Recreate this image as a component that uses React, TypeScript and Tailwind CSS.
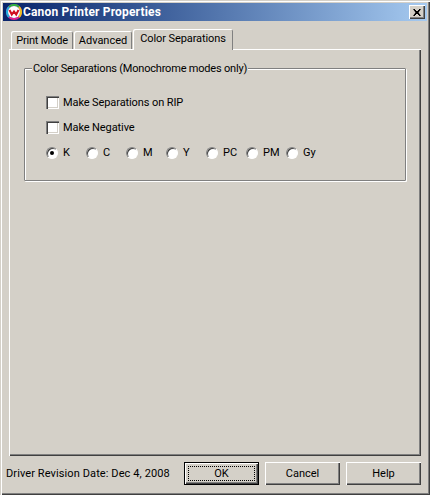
import type { ReactNode } from 'react'

const FONT = "font-['Roboto','Liberation_Sans',sans-serif]"
const RAISED =
  'shadow-[inset_1px_1px_0_#ffffff,inset_-1px_-1px_0_#404040,inset_-2px_-2px_0_#808080]'
const SUNKEN =
  'shadow-[inset_1px_1px_0_#808080,inset_2px_2px_0_#404040,inset_-1px_-1px_0_#ffffff,inset_-2px_-2px_0_#d4d0c8]'

const CHANNELS = [
  { label: 'K', checked: true },
  { label: 'C' },
  { label: 'M' },
  { label: 'Y' },
  { label: 'PC' },
  { label: 'PM' },
  { label: 'Gy' },
]

function AppLogo() {
  return (
    <svg width="16" height="16" viewBox="0 0 16 16" className="shrink-0">
      <circle cx="8" cy="8" r="7" fill="none" stroke="#e02090" strokeWidth="2" />
      <path d="M3 3 A7 7 0 0 1 13 3" fill="none" stroke="#30b040" strokeWidth="2" />
      <path d="M13 3 A7 7 0 0 1 13 13" fill="none" stroke="#f0c020" strokeWidth="2" />
      <path d="M3 13 A7 7 0 0 1 3 3" fill="none" stroke="#20b0e0" strokeWidth="2" />
      <circle cx="8" cy="8" r="6" fill="#ffffff" />
      <path d="M3.5 6 L5.8 10.5 L8 7.5 L10.2 10.5 L12.5 6" fill="none" stroke="#d01020" strokeWidth="2" />
    </svg>
  )
}

function Tab({ children, active, className }: { children: ReactNode; active?: boolean; className: string }) {
  return (
    <div
      className={`flex items-center justify-center rounded-t-[2px] bg-[#d4d0c8] shadow-[inset_1px_1px_0_#ffffff,inset_-1px_0_0_#808080] ${
        active ? 'relative z-10 -mx-px -mb-px h-[21px] pb-[2px]' : 'h-[18px] pt-[1px]'
      } ${className}`}
    >
      {children}
    </div>
  )
}

function Checkbox({ label }: { label: string }) {
  return (
    <div className="flex h-[13px] items-center gap-[4px]">
      <span className={`size-[13px] bg-white ${SUNKEN}`} />
      <span className="tracking-[-0.1px]">{label}</span>
    </div>
  )
}

function Radio({ label, checked }: { label: string; checked?: boolean }) {
  return (
    <div className="flex h-[13px] w-[40px] items-center gap-[5px]">
      <span className="flex size-[12px] items-center justify-center rounded-full border border-t-[#808080] border-r-white border-b-white border-l-[#808080] bg-white shadow-[inset_1px_1px_0_#404040]">
        {checked && <span className="size-[4px] rounded-full bg-black" />}
      </span>
      <span>{label}</span>
    </div>
  )
}

function DialogButton({ children, isDefault, className }: { children: ReactNode; isDefault?: boolean; className: string }) {
  if (isDefault) {
    return (
      <div className={`h-[23px] border border-black ${className}`}>
        <div className={`flex h-full items-center justify-center p-[3px] ${RAISED}`}>
          <div className="flex size-full items-center justify-center border border-dotted border-black">{children}</div>
        </div>
      </div>
    )
  }
  return <div className={`flex h-[23px] items-center justify-center ${RAISED} ${className}`}>{children}</div>
}

export default function App() {
  return (
    <div
      className={`flex h-[495px] w-[430px] flex-col bg-[#d4d0c8] p-[3px] text-[11px] leading-[13px] text-black ${FONT} shadow-[inset_1px_1px_0_#d4d0c8,inset_2px_2px_0_#ffffff,inset_-1px_-1px_0_#404040,inset_-2px_-2px_0_#808080]`}
    >
      {/* Title bar */}
      <div className="flex h-[18px] items-center bg-gradient-to-r from-[#0a246a] to-[#a6caf0] pr-[2px] pl-[3px] text-white">
        <AppLogo />
        <span className="ml-[1px] text-[12px] font-bold tracking-[0.17px]">Canon Printer Properties</span>
        <div className={`ml-auto flex h-[14px] w-[16px] items-center justify-center bg-[#d4d0c8] ${RAISED}`}>
          <svg width="8" height="7" viewBox="0 0 8 7">
            <path d="M0 0h2v1h1v1h2V1h1V0h2L5.5 3.5 8 7H6V6H5V5H3v1H2v1H0l2.5-3.5z" fill="#000" />
          </svg>
        </div>
      </div>

      {/* Tabs */}
      <div className="mt-[8px] flex items-end pl-[8px]">
        <Tab className="w-[62px] tracking-[-0.2px]">Print Mode</Tab>
        <Tab className="ml-px w-[58px]">Advanced</Tab>
        <Tab active className="ml-px w-[100px] tracking-[-0.1px]">
          Color Separations
        </Tab>
      </div>

      {/* Tab panel */}
      <div className="mx-[6px] flex h-[407px] flex-col bg-[#d4d0c8] px-[15px] pt-[19px] shadow-[inset_1px_1px_0_#ffffff,inset_-1px_-1px_0_#404040,inset_-2px_-2px_0_#808080]">
        <fieldset className="h-[113px] rounded-[1px] border border-[#808080] shadow-[1px_1px_0_#ffffff,inset_1px_1px_0_#ffffff]">
          <div className="flex flex-col">
            <span className="-mt-[7px] ml-[7px] self-start bg-[#d4d0c8] px-[1px] tracking-[-0.2px]">
              Color Separations (Monochrome modes only)
            </span>
            <div className="mt-[21px] flex flex-col gap-[12px] pl-[21px]">
              <Checkbox label="Make Separations on RIP" />
              <Checkbox label="Make Negative" />
              <div className="flex">
                {CHANNELS.map((c) => (
                  <Radio key={c.label} label={c.label} checked={c.checked} />
                ))}
              </div>
            </div>
          </div>
        </fieldset>
      </div>

      {/* Footer */}
      <div className="mt-[6px] flex items-center pr-[6px] pl-[3px]">
        <span className="w-[178px] tracking-[0.1px]">Driver Revision Date: Dec 4, 2008</span>
        <DialogButton isDefault className="w-[75px]">OK</DialogButton>
        <DialogButton className="ml-[6px] w-[75px]">Cancel</DialogButton>
        <DialogButton className="ml-[6px] w-[75px]">Help</DialogButton>
      </div>
    </div>
  )
}
